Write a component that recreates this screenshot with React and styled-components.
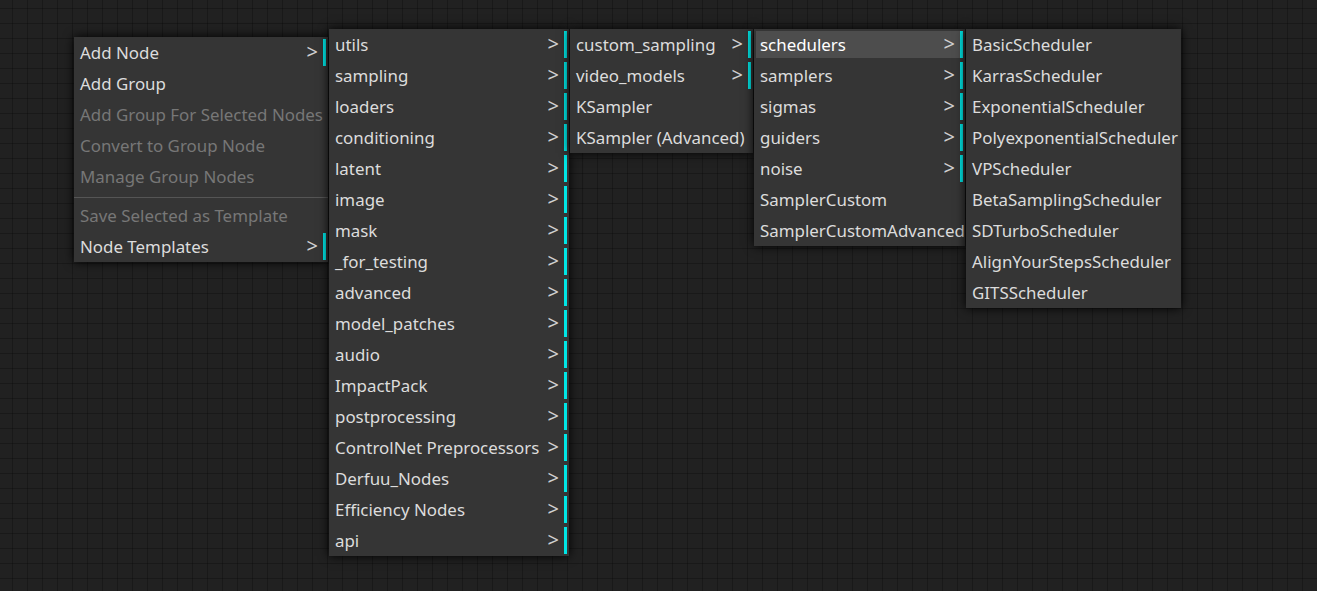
import React from 'react'
import styled, {createGlobalStyle} from 'styled-components'

const GlobalStyle = createGlobalStyle`
    html, body {
        margin: 0;
        padding: 0;
        height: 100%;
    }
    body {
        background-color: #212121;
        background-image:
            linear-gradient(to right, rgba(0,0,0,0.25) 1px, transparent 1px),
            linear-gradient(to bottom, rgba(0,0,0,0.25) 1px, transparent 1px);
        background-size: 15px 15px;
        background-position: 12px 8px;
        font-family: "Noto Sans", "Open Sans", sans-serif;
    }
    #root {
        min-height: 100vh;
    }
`

const menus = [
    {width: 254, offset: 8, items: [
        {label: 'Add Node', sub: true},
        {label: 'Add Group'},
        {label: 'Add Group For Selected Nodes', disabled: true},
        {label: 'Convert to Group Node', disabled: true},
        {label: 'Manage Group Nodes', disabled: true},
        {separator: true},
        {label: 'Save Selected as Template', disabled: true},
        {label: 'Node Templates', sub: true},
    ]},
    {width: 240, offset: 0, items: [
        'utils', 'sampling', 'loaders', 'conditioning', 'latent', 'image', 'mask',
        '_for_testing', 'advanced', 'model_patches', 'audio', 'ImpactPack',
        'postprocessing', 'ControlNet Preprocessors', 'Derfuu_Nodes',
        'Efficiency Nodes', 'api',
    ].map(label => ({label, sub: true}))},
    {width: 183, offset: 0, items: [
        {label: 'custom_sampling', sub: true},
        {label: 'video_models', sub: true},
        {label: 'KSampler'},
        {label: 'KSampler (Advanced)'},
    ]},
    {width: 211, offset: 0, items: [
        {label: 'schedulers', sub: true, active: true},
        {label: 'samplers', sub: true},
        {label: 'sigmas', sub: true},
        {label: 'guiders', sub: true},
        {label: 'noise', sub: true},
        {label: 'SamplerCustom'},
        {label: 'SamplerCustomAdvanced'},
    ]},
    {width: 215, offset: 0, items: [
        'BasicScheduler', 'KarrasScheduler', 'ExponentialScheduler',
        'PolyexponentialScheduler', 'VPScheduler', 'BetaSamplingScheduler',
        'SDTurboScheduler', 'AlignYourStepsScheduler', 'GITSScheduler',
    ].map(label => ({label}))},
]

const ContextMenu = ({width, offset, items}) => (
    <Menu $width={width} $offset={offset}>
        {items.map((item, i) => item.separator
            ? <Separator key={i}/>
            : (
                <Entry key={i} $sub={item.sub} $disabled={item.disabled} $active={item.active}>
                    <Label>{item.label}</Label>
                    {item.sub && <Chevron>&gt;</Chevron>}
                </Entry>
            )
        )}
    </Menu>
)

const App = () => {
    return (
        <Canvas>
            <GlobalStyle/>
            {menus.map((m, i) => <ContextMenu key={i} {...m}/>)}
        </Canvas>
    )
}

export default App

const Canvas = styled.div`
    display: flex;
    align-items: flex-start;
    gap: 1px;
    padding: 29px 0 0 74px;
    min-height: 100vh;
    box-sizing: border-box;
`

const Menu = styled.div`
    display: flex;
    flex-direction: column;
    gap: 4px;
    width: ${p => p.$width}px;
    margin-top: ${p => p.$offset}px;
    padding: 2px;
    box-sizing: border-box;
    background-color: #353535;
    box-shadow: 0 0 10px black;
    flex-shrink: 0;
`

const Entry = styled.div`
    display: flex;
    align-items: flex-start;
    justify-content: space-between;
    height: 27px;
    box-sizing: border-box;
    padding: 2px 5px 0 4px;
    line-height: 23px;
    font-size: 16.9px;
    white-space: nowrap;
    color: ${p => p.$disabled ? '#777777' : p.$active ? '#ffffff' : '#dcdcdc'};
    background-color: ${p => p.$active ? '#4d4d4d' : 'transparent'};
    border-right: ${p => p.$sub ? '3px solid #00e6e6' : 'none'};
`

const Label = styled.span`
    overflow: visible;
`

const Chevron = styled.span`
    margin-top: -1px;
    font-size: 20px;
    color: #d0d0d0;
`

const Separator = styled.div`
    height: 4px;
    margin: 0 -2px;
    box-sizing: border-box;
    border-bottom: 1px solid #555555;
`
